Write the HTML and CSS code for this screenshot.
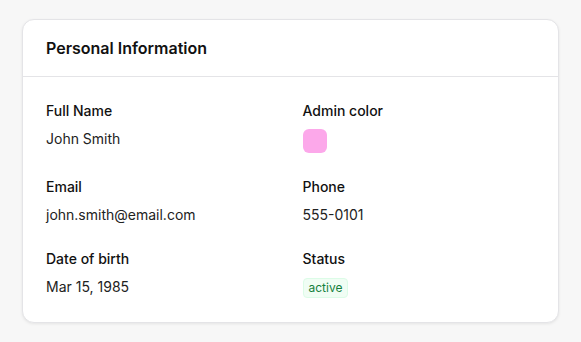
FILE: index.html
```html
<!DOCTYPE html>
<html lang="en">
<head>
  <meta charset="UTF-8" />
  <meta name="viewport" content="width=device-width, initial-scale=1.0"/>
  <title>Personal Information</title>
  <link rel="stylesheet" href="styles.css">
</head>
<body>
  <div class="card">
    <div class="card-header">
      <h2>Personal Information</h2>
    </div>
    <div class="card-body">
      <div class="field">
        <div class="label">Full Name</div>
        <div class="value">John Smith</div>
      </div>
      <div class="field">
        <div class="label">Admin color</div>
        <div class="swatch"></div>
      </div>
      <div class="field">
        <div class="label">Email</div>
        <div class="value">john.smith@email.com</div>
      </div>
      <div class="field">
        <div class="label">Phone</div>
        <div class="value">555-0101</div>
      </div>
      <div class="field">
        <div class="label">Date of birth</div>
        <div class="value">Mar 15, 1985</div>
      </div>
      <div class="field">
        <div class="label">Status</div>
        <div class="value"><span class="badge">active</span></div>
      </div>
    </div>
  </div>
</body>
</html>
```

FILE: styles.css
```css
body {
  font-family: Inter, "Noto Sans", sans-serif;
  background: #f7f7f7;
  margin: 0;
  padding: 19px 22px;
}
.card {
  background: white;
  border: 1px solid #e4e4e7;
  border-radius: 12px;
  box-shadow: 0 1px 3px rgba(0,0,0,0.08);
}
.card-header {
  padding: 19px 23px 19px;
  border-bottom: 1px solid #e4e4e7;
}
.card-header h2 {
  margin: 0;
  font-size: 16px;
  line-height: 18px;
  font-weight: 600;
  color: #111;
}
.card-body {
  padding: 24px 23px;
  display: grid;
  grid-template-columns: 1fr 1fr;
  column-gap: 24px;
  row-gap: 24px;
}
.label {
  font-size: 14px;
  line-height: 20px;
  font-weight: 500;
  color: #111;
}
.value {
  margin-top: 8px;
  font-size: 14px;
  line-height: 20px;
  color: #222;
}
.swatch {
  margin-top: 8px;
  width: 24px;
  height: 24px;
  border-radius: 6px;
  background: #fca8ea;
}
.badge {
  display: inline-block;
  font-size: 12px;
  line-height: 16px;
  padding: 1px 5px;
  color: #15803d;
  background: #f0fdf4;
  border: 1px solid #dcfce7;
  border-radius: 4px;
}
```
